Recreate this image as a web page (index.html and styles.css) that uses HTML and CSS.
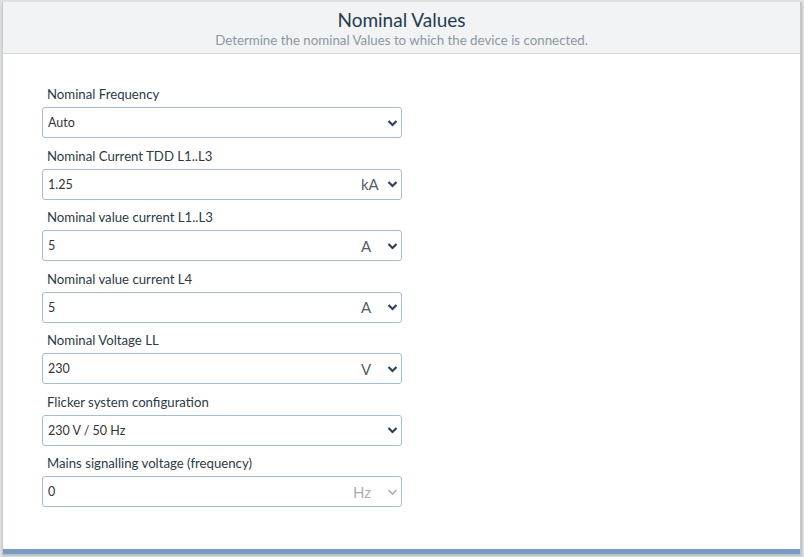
FILE: index.html
```html
<!DOCTYPE html>
<html>
<head>
<meta charset="utf-8">
<link rel="stylesheet" href="styles.css">
</head>
<body>
<div class="card">
  <div class="header">
    <div class="title">Nominal Values</div>
    <div class="subtitle">Determine the nominal Values to which the device is connected.</div>
  </div>
  <div class="body">
    <div class="field">
      <div class="label">Nominal Frequency</div>
      <div class="input"><span class="value">Auto</span><span class="chev"><svg width="11" height="8" viewBox="0 0 11 8"><path d="M1.5 2 L5.5 6 L9.5 2" fill="none" stroke="currentColor" stroke-width="2.2"/></svg></span></div>
    </div>
    <div class="field">
      <div class="label">Nominal Current TDD L1..L3</div>
      <div class="input"><span class="value">1.25</span><span class="unit">kA</span><span class="chev"><svg width="11" height="8" viewBox="0 0 11 8"><path d="M1.5 2 L5.5 6 L9.5 2" fill="none" stroke="currentColor" stroke-width="2.2"/></svg></span></div>
    </div>
    <div class="field">
      <div class="label">Nominal value current L1..L3</div>
      <div class="input"><span class="value">5</span><span class="unit">A</span><span class="chev"><svg width="11" height="8" viewBox="0 0 11 8"><path d="M1.5 2 L5.5 6 L9.5 2" fill="none" stroke="currentColor" stroke-width="2.2"/></svg></span></div>
    </div>
    <div class="field">
      <div class="label">Nominal value current L4</div>
      <div class="input"><span class="value">5</span><span class="unit">A</span><span class="chev"><svg width="11" height="8" viewBox="0 0 11 8"><path d="M1.5 2 L5.5 6 L9.5 2" fill="none" stroke="currentColor" stroke-width="2.2"/></svg></span></div>
    </div>
    <div class="field">
      <div class="label">Nominal Voltage LL</div>
      <div class="input"><span class="value">230</span><span class="unit">V</span><span class="chev"><svg width="11" height="8" viewBox="0 0 11 8"><path d="M1.5 2 L5.5 6 L9.5 2" fill="none" stroke="currentColor" stroke-width="2.2"/></svg></span></div>
    </div>
    <div class="field">
      <div class="label">Flicker system configuration</div>
      <div class="input"><span class="value">230 V / 50 Hz</span><span class="chev"><svg width="11" height="8" viewBox="0 0 11 8"><path d="M1.5 2 L5.5 6 L9.5 2" fill="none" stroke="currentColor" stroke-width="2.2"/></svg></span></div>
    </div>
    <div class="field">
      <div class="label">Mains signalling voltage (frequency)</div>
      <div class="input disabled"><span class="value">0</span><span class="unit hz">Hz</span><span class="chev"><svg width="11" height="8" viewBox="0 0 11 8"><path d="M1.5 2 L5.5 6 L9.5 2" fill="none" stroke="currentColor" stroke-width="1.6"/></svg></span></div>
    </div>
  </div>
  <div class="footer"></div>
</div>
</body>
</html>
```
FILE: styles.css
```css
html, body {
  margin: 0;
  padding: 0;
}
body {
  background: #dfe2e5;
  font-family: Lato, "Noto Sans", sans-serif;
  width: 804px;
  height: 557px;
  overflow: hidden;
  padding: 2px 2px 0 2px;
  box-sizing: border-box;
}
.card {
  background: #fff;
  border-left: 1px solid #c9cdd1;
  border-right: 2px solid #c3c7cb;
  height: 552px;
  display: flex;
  flex-direction: column;
  box-shadow: 0 2px 2px rgba(0,0,0,0.18);
}
.header {
  background: #f2f3f5;
  border-bottom: 1px solid #d6d8db;
  height: 52px;
  box-sizing: border-box;
  text-align: center;
  padding-top: 7px;
}
.title {
  font-size: 19px;
  line-height: 22px;
  color: #243b4f;
}
.subtitle {
  font-size: 13.3px;
  line-height: 19px;
  color: #8a98a3;
}
.body {
  flex: 1;
  padding: 31px 0 0 39px;
}
.field {
  width: 360px;
  height: 61.5px;
}
.label {
  font-size: 13.2px;
  line-height: 18px;
  color: #2c3a46;
  padding-left: 5px;
  margin-bottom: 4px;
}
.input {
  height: 31px;
  box-sizing: border-box;
  border: 1px solid #a3bdd6;
  border-radius: 3px;
  display: flex;
  align-items: center;
  padding: 0 3px 0 5px;
  font-size: 12.5px;
  color: #333;
}
.value {
  flex: 1;
}
.unit {
  font-size: 15px;
  color: #555d66;
  width: 25px;
}
.unit.hz {
  margin-left: -8px;
  width: 33px;
}
.chev {
  color: #2f4155;
  width: 12px;
  display: flex;
  justify-content: center;
}
.input.disabled .unit {
  color: #a8b0b8;
}
.input.disabled .chev {
  color: #a8b0b8;
}
.footer {
  height: 5px;
  background: #7b9cc1;
}
```
